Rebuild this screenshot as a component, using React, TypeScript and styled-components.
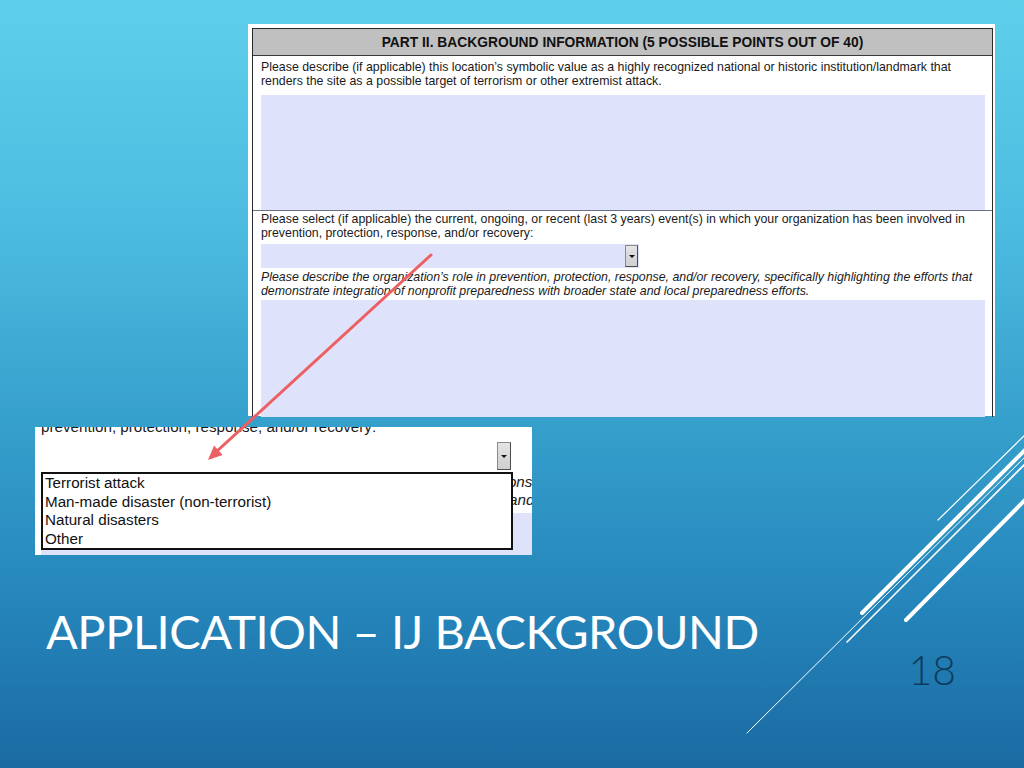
import { FC } from "react";
import styled, { createGlobalStyle } from "styled-components";

const GlobalStyle = createGlobalStyle`
  html,
  body {
    margin: 0;
    padding: 0;
  }

  body {
    width: 1024px;
    height: 768px;
    overflow: hidden;
    font-family: "Liberation Sans", Arial, sans-serif;
  }
`;

const Slide = styled.div`
  position: relative;
  width: 1024px;
  height: 768px;
  overflow: hidden;

  display: flex;
  flex-direction: column;

  background: linear-gradient(
    to bottom,
    #5ecfeb 0%,
    #4cbbe0 30%,
    #36a0cc 55%,
    #2586bb 78%,
    #1a6aa2 100%
  );
`;

/* ---------- top screenshot: the form ---------- */

const FormShot = styled.div`
  width: 747px;
  height: 392px;
  margin: 24px 0 0 248px;
  padding: 4px 2px 0 4px;
  box-sizing: border-box;
  background: #ffffff;
`;

const FormFrame = styled.div`
  height: 100%;
  display: flex;
  flex-direction: column;
  overflow: hidden;

  border: 1px solid #2a2a2a;
  border-bottom: none;
`;

const PartHeader = styled.div`
  height: 26px;
  flex-shrink: 0;
  display: flex;
  align-items: center;
  justify-content: center;

  background: #c0c0c0;
  border-bottom: 1px solid #3a3a3a;

  font-family: "Liberation Sans", Arial, sans-serif;
  font-weight: bold;
  font-size: 13.8px;
  color: #111111;
`;

const Question = styled.div<{ $top: number; $divider?: boolean; $grow?: boolean }>`
  display: flex;
  flex-direction: column;
  align-items: flex-start;
  padding: ${(p) => p.$top}px 7px 0 8px;
  border-top: ${(p) => (p.$divider ? "1px solid #6d7080" : "none")};
  flex: ${(p) => (p.$grow ? "1" : "none")};
`;

const Prompt = styled.div<{ $italic?: boolean; $gap?: number }>`
  margin-top: ${(p) => p.$gap ?? 0}px;
  font-family: "Liberation Sans", Arial, sans-serif;
  font-size: 12.35px;
  line-height: 14px;
  font-style: ${(p) => (p.$italic ? "italic" : "normal")};
  color: #1a1a1a;
  white-space: nowrap;
`;

const FillArea = styled.div<{ $gap: number; $height?: number }>`
  align-self: stretch;
  margin-top: ${(p) => p.$gap}px;
  height: ${(p) => (p.$height ? p.$height + "px" : "auto")};
  flex: ${(p) => (p.$height ? "none" : "1")};
  background: #dee3fb;
`;

const Dropdown = styled.div`
  width: 378px;
  height: 24px;
  margin-top: 4px;
  display: flex;
  justify-content: flex-end;
  align-items: center;
  padding-right: 1px;
  box-sizing: border-box;
  background: #dee3fb;
`;

const DropButton = styled.div<{ $w: number; $h: number }>`
  width: ${(p) => p.$w}px;
  height: ${(p) => p.$h}px;
  box-sizing: border-box;
  display: flex;
  align-items: center;
  justify-content: center;

  background: linear-gradient(to bottom, #e4e4e4, #cfcfcf);
  border: 1px solid #4d4d4d;
  border-top-color: #8a8a8a;
  border-left-color: #8a8a8a;

  &::after {
    content: "";
    width: 0;
    height: 0;
    border-left: 3px solid transparent;
    border-right: 3px solid transparent;
    border-top: 3px solid #111111;
  }
`;

/* ---------- bottom screenshot: opened list ---------- */

const ZoomShot = styled.div`
  position: relative;
  width: 497px;
  height: 128px;
  margin: 11px 0 0 35px;
  overflow: hidden;
  background: #ffffff;

  display: flex;
  flex-direction: column;
`;

const ZoomText = styled.div<{ $italic?: boolean; $gap: number; $indent: number }>`
  margin-top: ${(p) => p.$gap}px;
  padding-left: ${(p) => p.$indent}px;
  font-family: "Liberation Sans", Arial, sans-serif;
  font-size: 15.2px;
  line-height: ${(p) => (p.$italic ? 18 : 20)}px;
  font-style: ${(p) => (p.$italic ? "italic" : "normal")};
  color: #1a1a1a;
  white-space: nowrap;
`;

const ZoomDropRow = styled.div`
  height: 28px;
  margin-top: 5px;
  flex-shrink: 0;
  display: flex;
  justify-content: flex-end;
  padding-right: 21px;
`;

const ZoomField = styled.div`
  flex: 1;
  margin: 4px 0 0 6px;
  background: #dee3fb;
`;

const OptionList = styled.ul`
  position: absolute;
  top: 45px;
  left: 6px;
  width: 472px;
  height: 78px;
  margin: 0;
  padding: 0 0 0 2px;
  box-sizing: border-box;
  list-style: none;

  background: #ffffff;
  border: 2px solid #111111;
`;

const OptionItem = styled.li`
  font-family: "Liberation Sans", Arial, sans-serif;
  font-size: 15.2px;
  line-height: 18.5px;
  color: #111111;
  white-space: nowrap;
`;

/* ---------- footer ---------- */

const Footer = styled.div`
  display: flex;
  justify-content: space-between;
  align-items: flex-start;
  margin-top: 48px;
  padding: 0 68px 0 46px;
`;

const Title = styled.h1`
  margin: 0;
  font-family: Lato, "Open Sans", sans-serif;
  font-weight: 400;
  font-size: 47px;
  line-height: 1.2;
  letter-spacing: -0.45px;
  color: #ffffff;
  white-space: nowrap;
`;

const PageNumber = styled.div`
  margin-top: 42px;
  font-family: Lato, "Open Sans", sans-serif;
  font-weight: 300;
  font-size: 41px;
  line-height: 1.2;
  color: #0f3b5e;
`;

const Overlay = styled.svg`
  position: absolute;
  left: 0;
  top: 0;
  width: 1024px;
  height: 768px;
  pointer-events: none;
`;

const options = [
  "Terrorist attack",
  "Man-made disaster (non-terrorist)",
  "Natural disasters",
  "Other",
];

const stripes = [
  { x1: 1026, y1: 434, x2: 938, y2: 520, w: 1.2 },
  { x1: 1026, y1: 449, x2: 862, y2: 613, w: 4 },
  { x1: 1026, y1: 463, x2: 847, y2: 642, w: 1.6 },
  { x1: 1026, y1: 456, x2: 747, y2: 733, w: 1 },
  { x1: 1026, y1: 499, x2: 906, y2: 620, w: 4 },
];

const App: FC = () => {
  return (
    <Slide>
      <GlobalStyle />

      <FormShot>
        <FormFrame>
          <PartHeader>PART II. BACKGROUND INFORMATION (5 POSSIBLE POINTS OUT OF 40)</PartHeader>

          <Question $top={4}>
            <Prompt>
              Please describe (if applicable) this location’s symbolic value as a highly recognized
              national or historic institution/landmark that
            </Prompt>
            <Prompt>renders the site as a possible target of terrorism or other extremist attack.</Prompt>
            <FillArea $gap={7} $height={115} />
          </Question>

          <Question $top={1} $divider $grow>
            <Prompt>
              Please select (if applicable) the current, ongoing, or recent (last 3 years) event(s) in
              which your organization has been involved in
            </Prompt>
            <Prompt>prevention, protection, response, and/or recovery:</Prompt>
            <Dropdown>
              <DropButton $w={13} $h={22} />
            </Dropdown>
            <Prompt $italic $gap={2}>
              Please describe the organization’s role in prevention, protection, response, and/or
              recovery, specifically highlighting the efforts that
            </Prompt>
            <Prompt $italic>
              demonstrate integration of nonprofit preparedness with broader state and local
              preparedness efforts.
            </Prompt>
            <FillArea $gap={2} />
          </Question>
        </FormFrame>
      </FormShot>

      <ZoomShot>
        <ZoomText $gap={-10} $indent={6}>
          prevention, protection, response, and/or recovery:
        </ZoomText>
        <ZoomDropRow>
          <DropButton $w={14} $h={28} />
        </ZoomDropRow>
        <ZoomText $italic $gap={3} $indent={8}>
          Please describe the organization’s role in prevention, protection, response, and/or
          recovery, specifically highlighting the efforts that
        </ZoomText>
        <ZoomText $italic $gap={0} $indent={8}>
          demonstrate integration of nonprofit preparedness with broader state and local
          preparedness efforts.
        </ZoomText>
        <ZoomField />
        <OptionList>
          {options.map((o) => (
            <OptionItem key={o}>{o}</OptionItem>
          ))}
        </OptionList>
      </ZoomShot>

      <Footer>
        <Title>APPLICATION – IJ BACKGROUND</Title>
        <PageNumber>18</PageNumber>
      </Footer>

      <Overlay viewBox="0 0 1024 768">
        <line x1={431} y1={255} x2={216} y2={452} stroke="#ec5f63" strokeWidth={3} strokeLinecap="round" />
        <polygon points="208,460 222.6,455 214.1,445.6" fill="#ec5f63" />
        {stripes.map((s, i) => (
          <line
            key={i}
            x1={s.x1}
            y1={s.y1}
            x2={s.x2}
            y2={s.y2}
            stroke="#ffffff"
            strokeWidth={s.w}
            strokeLinecap="round"
          />
        ))}
      </Overlay>
    </Slide>
  );
};

export default App;
